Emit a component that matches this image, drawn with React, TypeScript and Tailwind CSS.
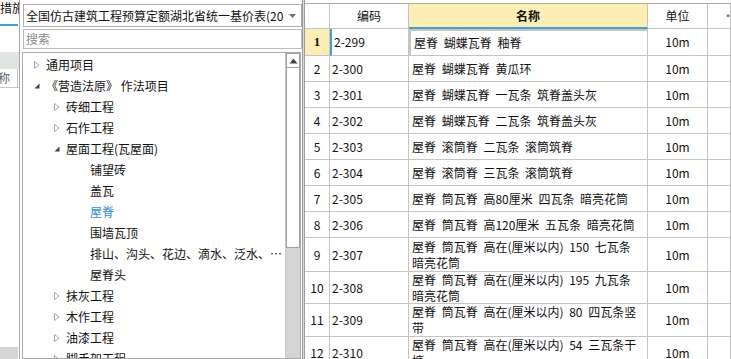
import type { ReactNode } from "react";

const FONT = { fontFamily: "'Noto Sans CJK SC', 'Noto Sans', sans-serif", };

type TreeItem = {
  label: string;
  level: number;
  state?: "open" | "closed";
  active?: boolean;
};

const tree: TreeItem[] = [
  { label: "通用项目", level: 0, state: "closed", },
  { label: "《营造法原》 作法项目", level: 0, state: "open", },
  { label: "砖细工程", level: 1, state: "closed", },
  { label: "石作工程", level: 1, state: "closed", },
  { label: "屋面工程(瓦屋面)", level: 1, state: "open", },
  { label: "铺望砖", level: 2, },
  { label: "盖瓦", level: 2, },
  { label: "屋脊", level: 2, active: true, },
  { label: "围墙瓦顶", level: 2, },
  { label: "排山、沟头、花边、滴水、泛水、…", level: 2, },
  { label: "屋脊头", level: 2, },
  { label: "抹灰工程", level: 1, state: "closed", },
  { label: "木作工程", level: 1, state: "closed", },
  { label: "油漆工程", level: 1, state: "closed", },
  { label: "脚手架工程", level: 1, state: "closed", },
];

type Row = { no: number; code: string; name: string[]; h: string; };

const rows: Row[] = [
  { no: 1, code: "2-299", name: ["屋脊 蝴蝶瓦脊 釉脊",], h: "h-[27px]", },
  { no: 2, code: "2-300", name: ["屋脊 蝴蝶瓦脊 黄瓜环",], h: "h-[26px]", },
  { no: 3, code: "2-301", name: ["屋脊 蝴蝶瓦脊 一瓦条 筑脊盖头灰",], h: "h-[26px]", },
  { no: 4, code: "2-302", name: ["屋脊 蝴蝶瓦脊 二瓦条 筑脊盖头灰",], h: "h-[26px]", },
  { no: 5, code: "2-303", name: ["屋脊 滚筒脊 二瓦条 滚筒筑脊",], h: "h-[26px]", },
  { no: 6, code: "2-304", name: ["屋脊 滚筒脊 三瓦条 滚筒筑脊",], h: "h-[26px]", },
  { no: 7, code: "2-305", name: ["屋脊 筒瓦脊 高80厘米 四瓦条 暗亮花筒",], h: "h-[26px]", },
  { no: 8, code: "2-306", name: ["屋脊 筒瓦脊 高120厘米 五瓦条 暗亮花筒",], h: "h-[26px]", },
  { no: 9, code: "2-307", name: ["屋脊 筒瓦脊 高在(厘米以内) 150 七瓦条", "暗亮花筒",], h: "h-[34px]", },
  { no: 10, code: "2-308", name: ["屋脊 筒瓦脊 高在(厘米以内) 195 九瓦条", "暗亮花筒",], h: "h-[32px]", },
  { no: 11, code: "2-309", name: ["屋脊 筒瓦脊 高在(厘米以内) 80 四瓦条竖", "带",], h: "h-[33px]", },
  { no: 12, code: "2-310", name: ["屋脊 筒瓦脊 高在(厘米以内) 54 三瓦条干", "塘",], h: "h-[33px]", },
];

function Arrow({ state, }: { state?: "open" | "closed"; },) {
  if (state === "closed") {
    return (
      <svg width="8" height="10" viewBox="0 0 8 10" className="shrink-0">
        <path d="M1.5 1.5 L6 5 L1.5 8.5 Z" fill="none" stroke="#a6a6a6" strokeWidth="1" />
      </svg>
    );
  }
  if (state === "open") {
    return (
      <svg width="8" height="10" viewBox="0 0 8 10" className="shrink-0">
        <path d="M6.5 2.5 L6.5 7.5 L1.5 7.5 Z" fill="#404040" />
      </svg>
    );
  }
  return <span className="w-[8px] shrink-0" />;
}

function TreePanel() {
  return (
    <div className="relative mt-[3px] ml-[2px] mr-[1px] flex-1 overflow-hidden border border-[#a9a9a9] bg-white">
      <div className="flex flex-col pt-[1px]">
        {tree.map((item,) => (
          <div
            key={item.label}
            className={`flex h-[21px] items-center whitespace-nowrap text-[12px] ${
              item.level === 0 ? "pl-[10px]" : item.level === 1 ? "pl-[30px]" : "pl-[53px]"
            }`}
          >
            <Arrow state={item.state} />
            <span
              className={`${item.state ? "ml-[5px]" : "ml-[6px]"} ${item.active ? "text-[#2f8fe6]" : "text-[#111]"}`}
            >
              {item.label}
            </span>
          </div>
        ))}
      </div>
      {/* scrollbar */}
      <div className="absolute right-0 top-0 bottom-0 flex w-[15px] flex-col border-l border-[#c8c8c8] bg-[#d4d4d4]">
        <div className="flex h-[15px] items-center justify-center border border-[#a0a0a0] bg-white">
          <svg width="9" height="6" viewBox="0 0 9 6">
            <path d="M4.5 0.5 L8.5 5.5 L0.5 5.5 Z" fill="#444" />
          </svg>
        </div>
        <div className="h-[180px] border border-t-0 border-[#a0a0a0] bg-white" />
      </div>
    </div>
  );
}

function Cell({ className, children, }: { className?: string; children?: ReactNode; },) {
  return (
    <div className={`flex items-center border-r border-b border-[#c4c4c4] ${className ?? ""}`}>
      {children}
    </div>
  );
}

function Table() {
  return (
    <div className="mt-[3px] border-t border-[#a8a8a8] text-[12px] text-[#111]">
      <div className="grid h-[25px] grid-cols-[25px_79px_239px_60px_1fr]">
        <Cell className="bg-white" />
        <Cell className="justify-center">编码</Cell>
        <Cell className="justify-center border-b-2 border-b-[#3ba3d6] bg-[#fdeeb4] font-bold">名称</Cell>
        <Cell className="justify-center">单位</Cell>
        <Cell className="justify-end overflow-hidden">
          <span className="-mr-[4px] text-[#666]">·</span>
        </Cell>
      </div>
      {rows.map((r,) => {
        const sel = r.no === 1;
        return (
          <div key={r.no} className={`grid grid-cols-[25px_79px_239px_60px_1fr] ${r.h}`}>
            <Cell
              className={`justify-center ${sel ? "bg-[#fdeeb4] font-bold text-[13px]" : ""}`}
            >
              <span style={sel ? { fontFamily: "'Liberation Serif', serif", } : undefined}>{r.no}</span>
            </Cell>
            <Cell className={`pl-[2px] ${sel ? "border-l-2 border-l-[#3ba3d6] pl-[1px]" : ""}`}>
              {r.code}
            </Cell>
            <Cell
              className={`overflow-hidden pl-[3px] ${
                sel ? "border-2 border-[#7e7e7e] pl-[2px]" : ""
              }`}
            >
              <div className="flex flex-col whitespace-nowrap leading-[16px] [word-spacing:3px]">
                {r.name.map((line,) => <span key={line}>{line}</span>)}
              </div>
            </Cell>
            <Cell className="justify-center">10m</Cell>
            <Cell />
          </div>
        );
      })}
    </div>
  );
}

export default function App() {
  return (
    <div className="flex h-[359px] w-[731px] overflow-hidden bg-white" style={FONT}>
      {/* left strip */}
      <div className="flex w-[20px] shrink-0 flex-col overflow-hidden border-r border-[#a9a9a9] text-[12px] text-[#111]">
        <div className="h-[24px] whitespace-nowrap pt-[1px] leading-[14px]">措施</div>
        <div className="h-[2px] w-[18px] bg-[#3ba3d6]" />
        <div className="h-[26px]" />
        <div className="h-[17px] bg-[#dfe5e1]" />
        <div className="flex h-[19px] items-center border-b border-[#c4c4c4]">
          <span className="-ml-[2px] text-[#666]">称</span>
          <span className="ml-auto mr-[1px] h-full w-px bg-[#c4c4c4]" />
        </div>
        <div className="flex-1" />
        <div className="h-[12px] w-[18px] bg-[#d4d4d4]" />
      </div>

      {/* middle: library tree */}
      <div className="flex w-[282px] shrink-0 flex-col bg-white">
        <div className="mt-[4px] ml-[3px] flex h-[23px] items-center border border-[#acacac] bg-white pl-[2px] pr-[3px] text-[12px] text-[#111]">
          <span className="flex-1 overflow-hidden whitespace-nowrap">全国仿古建筑工程预算定额湖北省统一基价表(20</span>
          <svg width="7" height="4" viewBox="0 0 7 4" className="ml-[4px] mr-[2px] shrink-0">
            <path d="M0 0 L7 0 L3.5 4 Z" fill="#6f6f6f" />
          </svg>
        </div>
        <div className="mt-[2px] ml-[3px] flex h-[20px] items-center border border-[#bdbdbd] pl-[2px] text-[12px] text-[#8a8a8a]">
          搜索
        </div>
        <TreePanel />
      </div>

      {/* right: quota table */}
      <div className="flex flex-1 overflow-hidden">
        <div className="w-[3px] shrink-0 border-x border-[#9c9c9c] bg-[#d8d8d8]" />
        <div className="flex-1">
          <Table />
        </div>
      </div>
    </div>
  );
}
